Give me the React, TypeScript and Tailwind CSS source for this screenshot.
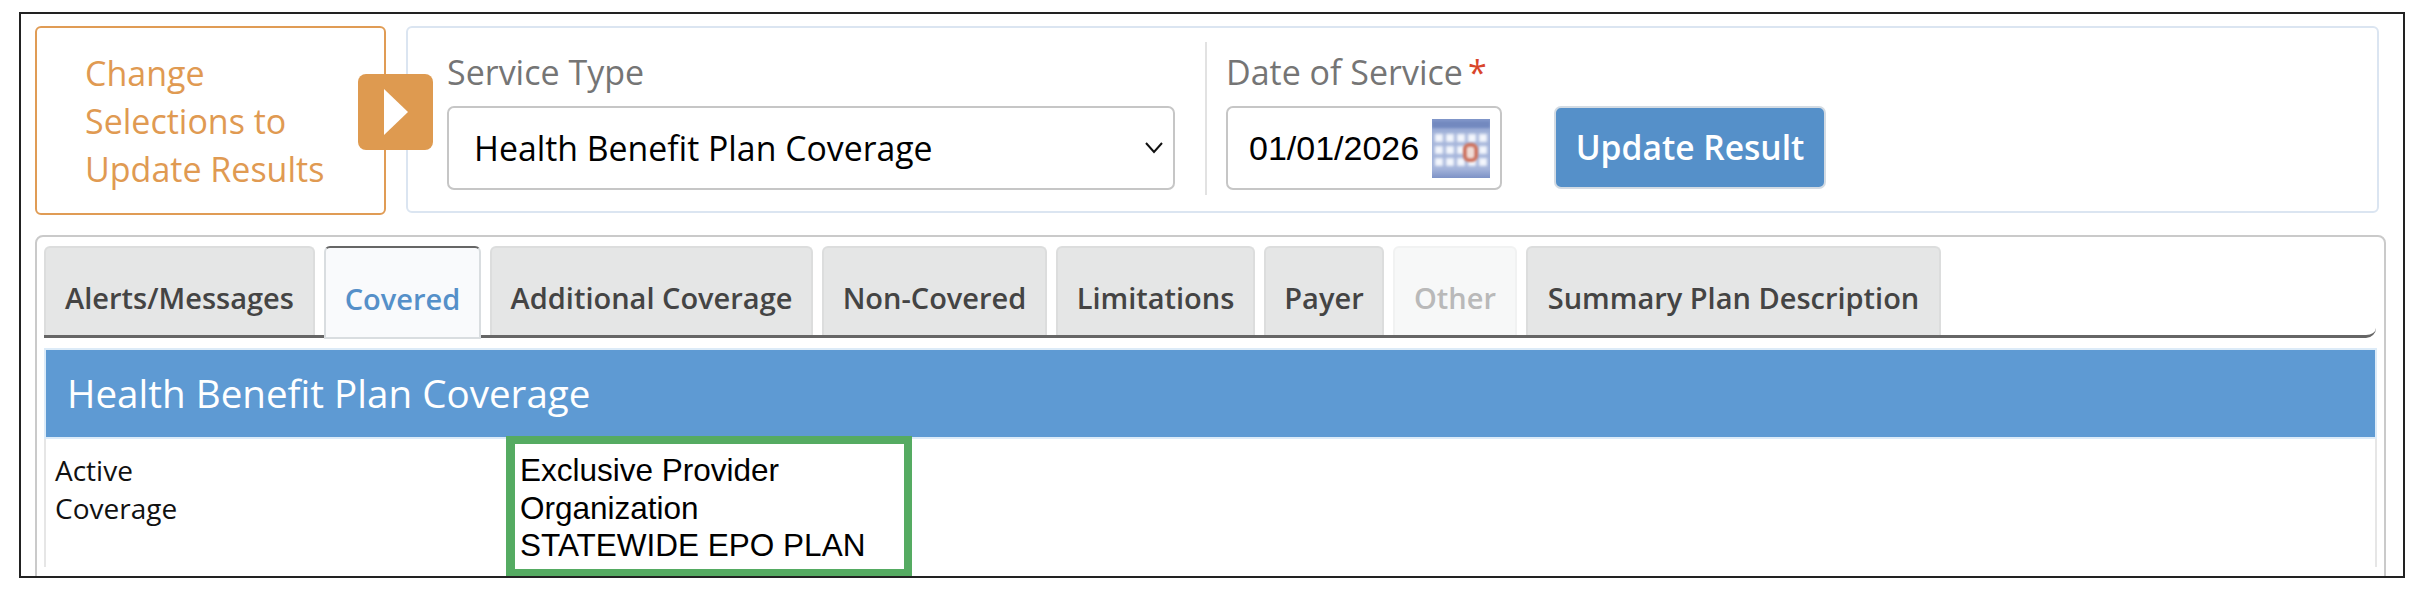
import React from "react";

const tabs = [
  { label: "Alerts/Messages", w: "w-[271px]", kind: "normal" },
  { label: "Covered", w: "w-[157px]", kind: "active" },
  { label: "Additional Coverage", w: "w-[323px]", kind: "normal" },
  { label: "Non-Covered", w: "w-[225px]", kind: "normal" },
  { label: "Limitations", w: "w-[199px]", kind: "normal" },
  { label: "Payer", w: "w-[120px]", kind: "normal" },
  { label: "Other", w: "w-[124px]", kind: "disabled" },
  { label: "Summary Plan Description", w: "w-[415px]", kind: "normal" },
];

function CalendarIcon() {
  return (
    <svg width="58" height="59" viewBox="0 0 58 59" className="shrink-0">
      <defs>
        <filter id="soft" x="-20%" y="-20%" width="140%" height="140%">
          <feGaussianBlur stdDeviation="1.6" />
        </filter>
        <filter id="softer" x="-30%" y="-30%" width="160%" height="160%">
          <feGaussianBlur stdDeviation="0.9" />
        </filter>
        <linearGradient id="calbg" x1="0" y1="0" x2="0" y2="1">
          <stop offset="0" stopColor="#7f95c9" />
          <stop offset="0.25" stopColor="#a5b5da" />
          <stop offset="0.85" stopColor="#a3b3da" />
          <stop offset="1" stopColor="#7d92c6" />
        </linearGradient>
      </defs>
      <rect width="58" height="59" fill="url(#calbg)" />
      <rect y="2" width="58" height="7" fill="#7389bf" filter="url(#softer)" />
      <g filter="url(#soft)" fill="#f3f6fc">
        {[15, 27, 39].map((y) =>
          [3, 14, 25, 36, 47].map((x) => <rect key={`${x}-${y}`} x={x} y={y} width="8" height="8" />),
        )}
      </g>
      <rect x="33" y="26" width="11" height="15" rx="4" fill="#f0dcd6" stroke="#cf7460" strokeWidth="4" filter="url(#softer)" />
    </svg>
  );
}

export default function App() {
  return (
    <div className="h-[590px] w-[2418px] bg-white pl-[19px] pt-[12px] font-['Open_Sans',sans-serif]">
      <div className="relative h-[566px] w-[2386px] overflow-hidden border-2 border-[#222222] bg-white pl-[14px] pt-[12px]">
        <div className="relative flex w-[2344px] gap-[20px]">
          <div className="flex h-[189px] w-[351px] shrink-0 flex-col justify-center rounded-[6px] border-2 border-[#e09c55] pl-[48px] text-[34px] leading-[48px] text-[#e09a52]">
            <div>Change</div>
            <div>Selections to</div>
            <div>Update Results</div>
          </div>
          <div className="flex h-[187px] w-[1973px] shrink-0 rounded-[6px] border-2 border-[#dbe5f1] pl-[39px] pt-[15px]">
            <div className="w-[728px]">
              <div className="mt-[5px] h-[48px] text-[34px] leading-[48px] text-[#757575]">Service Type</div>
              <div className="relative mt-[10px] h-[84px]">
                <select
                  defaultValue="hbpc"
                  className="h-full w-full appearance-none rounded-[7px] border-2 border-[#c6c6c6] bg-white pl-[25px] text-[33.8px] text-black"
                >
                  <option value="hbpc">Health Benefit Plan Coverage</option>
                </select>
                <svg width="20" height="13" viewBox="0 0 20 13" className="absolute right-[11px] top-[35px]" fill="none" stroke="#111" strokeWidth="2">
                  <path d="M2 2 L10 11 L18 2" />
                </svg>
              </div>
            </div>
            <div className="ml-[30px] mt-[-1px] h-[153px] w-[2px] bg-[#e2e2e2]" />
            <div className="ml-[19px] w-[276px]">
              <div className="mt-[5px] flex h-[48px] text-[34px] leading-[48px] text-[#757575]">
                Date of Service
                <span className="ml-[5px] text-[#d9452b]">*</span>
              </div>
              <div className="mt-[10px] flex h-[84px] items-center rounded-[7px] border-2 border-[#c6c6c6] bg-white pl-[21px] pr-[10px]">
                <span className="w-[185px] font-['Liberation_Sans',sans-serif] text-[34px] text-black">01/01/2026</span>
                <CalendarIcon />
              </div>
            </div>
            <button className="ml-[52px] mt-[63px] h-[83px] w-[272px] rounded-[7px] border-2 border-[#d3dbe3] bg-[#5590c9] text-[33.6px] font-semibold text-white">
              Update Result
            </button>
          </div>
          <div className="absolute left-[323px] top-[48px] flex h-[76px] w-[75px] items-center justify-center rounded-[8px] bg-[#de9a50]">
            <svg width="26" height="48" viewBox="0 0 26 48">
              <path d="M1 1 L25 24 L1 47 Z" fill="#fff" />
            </svg>
          </div>
        </div>

        <div className="mt-[20px] h-[400px] w-[2351px] rounded-[8px] border-2 border-[#cacaca] px-[7px] pt-[9px]">
          <div className="relative flex h-[92px] w-[2332px] gap-[9px] rounded-br-[10px] border-b-[3px] border-[#666666]">
            {tabs.map((t) => (
              <div
                key={t.label}
                className={
                  t.w +
                  " flex items-center justify-center rounded-t-[6px] border-2 pt-[12px] text-[29px] font-semibold " +
                  (t.kind === "active"
                    ? "relative z-10 h-[93px] border-[#d9dde0] border-t-[#666666] bg-[#f9fafc] text-[#5590c9]"
                    : t.kind === "disabled"
                      ? "h-[89px] border-[#f1f2f2] border-b-0 bg-[#f7f8f8] text-[#b9b9b9]"
                      : "h-[89px] border-[#dcdddd] border-b-0 bg-[#e5e6e6] text-[#444444]")
                }
              >
                {t.label}
              </div>
            ))}
          </div>
          <div className="mt-[10px] w-[2333px] border-2 border-[#dcebf8] bg-[#5e9ad3] py-[16px] pl-[21px] text-[38.6px] leading-[55px] text-white">
            Health Benefit Plan Coverage
          </div>
          <div className="flex h-[128px] w-[2333px] border-x-2 border-[#e6e6e6] pl-[9px] pt-[12px] text-[28px] leading-[38px] text-[#111111]">
            <div>
              <div>Active</div>
              <div>Coverage</div>
            </div>
          </div>
        </div>

        <div className="absolute left-[485px] top-[422px] h-[141px] w-[406px] border-[8px] border-l-[9px] border-[#55ab62] bg-white pl-[5px] pt-[8px] font-['Liberation_Sans',sans-serif] text-[31.5px] leading-[37.5px] text-black">
          <div>Exclusive Provider</div>
          <div>Organization</div>
          <div>STATEWIDE EPO PLAN</div>
        </div>
      </div>
    </div>
  );
}
